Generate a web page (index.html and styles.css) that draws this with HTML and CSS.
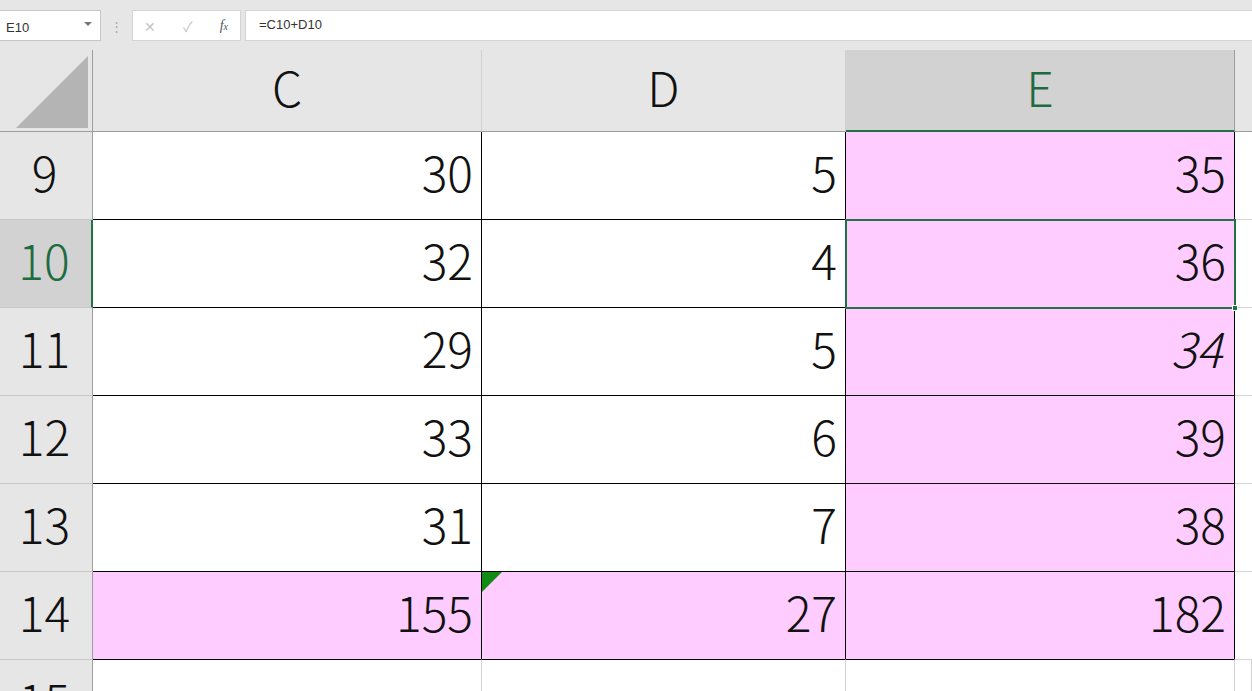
FILE: index.html
```html
<!DOCTYPE html>
<html lang="ja">
<head>
    <meta charset="UTF-8">
    <title>Excel - E10</title>
    <link rel="stylesheet" href="styles.css">
</head>
<body>
    <div class="toolbar">
        <div class="name-box">
            <span>E10</span>
            <span class="arrow"></span>
        </div>
        <div class="grip">⋮</div>
        <div class="fx-buttons">
            <span class="btn">✕</span>
            <span class="btn">✓</span>
            <span class="btn fx"><i>f</i><small>x</small></span>
        </div>
        <div class="formula">=C10+D10</div>
    </div>

    <div class="sheet">
        <div class="corner"><div class="tri"></div></div>
        <div class="col-head">C</div>
        <div class="col-head">D</div>
        <div class="col-head active">E</div>
        <div class="col-head rest"></div>

        <div class="row-head">9</div>
        <div class="cell">30</div>
        <div class="cell">5</div>
        <div class="cell pink">35</div>
        <div class="cell rest"></div>

        <div class="row-head active">10</div>
        <div class="cell">32</div>
        <div class="cell">4</div>
        <div class="cell pink selected">36<span class="handle"></span></div>
        <div class="cell rest"></div>

        <div class="row-head">11</div>
        <div class="cell">29</div>
        <div class="cell">5</div>
        <div class="cell pink italic">34</div>
        <div class="cell rest"></div>

        <div class="row-head">12</div>
        <div class="cell">33</div>
        <div class="cell">6</div>
        <div class="cell pink">39</div>
        <div class="cell rest"></div>

        <div class="row-head">13</div>
        <div class="cell">31</div>
        <div class="cell">7</div>
        <div class="cell pink">38</div>
        <div class="cell rest"></div>

        <div class="row-head">14</div>
        <div class="cell pink">155</div>
        <div class="cell pink flag">27</div>
        <div class="cell pink">182</div>
        <div class="cell rest"></div>

        <div class="row-head">15</div>
        <div class="cell empty"></div>
        <div class="cell empty"></div>
        <div class="cell empty"></div>
        <div class="cell empty rest"></div>
    </div>
</body>
</html>
```

FILE: styles.css
```css
* {
    box-sizing: border-box;
}
body {
    margin: 0;
    width: 1252px;
    height: 691px;
    overflow: hidden;
    background: #e6e6e6;
    font-family: "Noto Sans CJK JP", "Noto Sans", sans-serif;
}
.toolbar {
    height: 50px;
    display: flex;
    align-items: flex-start;
    padding-top: 10px;
}
.name-box {
    width: 101px;
    height: 31px;
    background: white;
    border: 1px solid #c6c6c6;
    border-left: none;
    display: flex;
    align-items: center;
    justify-content: space-between;
    padding: 3px 8px 0 6px;
    font-family: "Liberation Sans", Arial, sans-serif;
    font-size: 13px;
    color: #333;
}
.arrow {
    width: 0;
    height: 0;
    border-left: 4px solid transparent;
    border-right: 4px solid transparent;
    border-top: 4px solid #777;
    margin-top: -6px;
}
.grip {
    width: 31px;
    height: 31px;
    text-align: center;
    line-height: 31px;
    color: #aaa;
    font-size: 13px;
}
.fx-buttons {
    width: 109px;
    height: 31px;
    background: white;
    border: 1px solid #d4d4d4;
    display: flex;
    align-items: center;
    justify-content: space-between;
    padding: 0 12px 0 11px;
    color: #c4c4c4;
    font-size: 14px;
}
.fx-buttons .fx {
    color: #555;
    font-family: "Liberation Serif", serif;
    font-size: 14px;
}
.fx small {
    font-size: 10px;
    font-style: italic;
}
.formula {
    flex: 1;
    height: 31px;
    margin-left: 4px;
    background: white;
    border: 1px solid #d4d4d4;
    border-right: none;
    padding: 6px 0 0 13px;
    font-family: "Liberation Sans", Arial, sans-serif;
    font-size: 13px;
    color: #333;
}
.sheet {
    display: grid;
    grid-template-columns: 93px 389px 364px 389px 1fr;
    grid-template-rows: 82px repeat(7, 88px);
    background: white;
}
.corner {
    background: #e6e6e6;
    border-right: 1px solid #9e9e9e;
    border-bottom: 1px solid #9e9e9e;
    position: relative;
}
.tri {
    position: absolute;
    right: 4px;
    bottom: 3px;
    width: 72px;
    height: 72px;
    background: #b4b4b4;
    clip-path: polygon(100% 0, 100% 100%, 0 100%);
}
.col-head {
    background: #e6e6e6;
    border-right: 1px solid #d0d0d0;
    border-bottom: 1px solid #9e9e9e;
    display: flex;
    align-items: center;
    justify-content: center;
    font-size: 48px;
    font-weight: 300;
    color: #111;
    padding-bottom: 9px;
}
.col-head.active {
    background: #d2d2d2;
    color: #1e6b41;
    border-bottom: 2px solid #217346;
    border-right-color: #9e9e9e;
}
.col-head.rest {
    border-right: none;
}
.row-head {
    background: #e6e6e6;
    border-right: 1px solid #9e9e9e;
    border-bottom: 1px solid #c8c8c8;
    display: flex;
    align-items: center;
    justify-content: center;
    font-size: 48px;
    font-weight: 300;
    color: #111;
    padding: 0 3px 9px 0;
}
.row-head.active {
    background: #d2d2d2;
    color: #1e6b41;
    border-right: 2px solid #217346;
}
.cell {
    border-right: 1px solid #000;
    border-bottom: 1px solid #000;
    display: flex;
    align-items: center;
    justify-content: flex-end;
    padding: 0 8px 9px 0;
    font-size: 48px;
    font-weight: 300;
    color: #111;
    position: relative;
}
.cell.rest {
    border-right: none;
    border-bottom: 1px solid #d4d4d4;
}
.cell.pink {
    background: #ffccff;
}
.cell.italic {
    font-style: italic;
    padding-right: 12px;
}
.cell.empty {
    border-right: 1px solid #d4d4d4;
    border-bottom: 1px solid #d4d4d4;
    border-top: 1px solid #000;
    margin-top: -1px;
}
.cell.empty.rest {
    border-top: none;
    margin-top: 0;
}
.cell.selected {
    outline: 2px solid #217346;
    outline-offset: -1px;
    z-index: 1;
}
.handle {
    position: absolute;
    right: -4px;
    bottom: -4px;
    width: 6px;
    height: 6px;
    background: #217346;
    border: 1px solid white;
}
.cell.flag::before {
    content: "";
    position: absolute;
    left: 0;
    top: 0;
    width: 20px;
    height: 20px;
    background: #138a13;
    clip-path: polygon(0 0, 100% 0, 0 100%);
}
```
